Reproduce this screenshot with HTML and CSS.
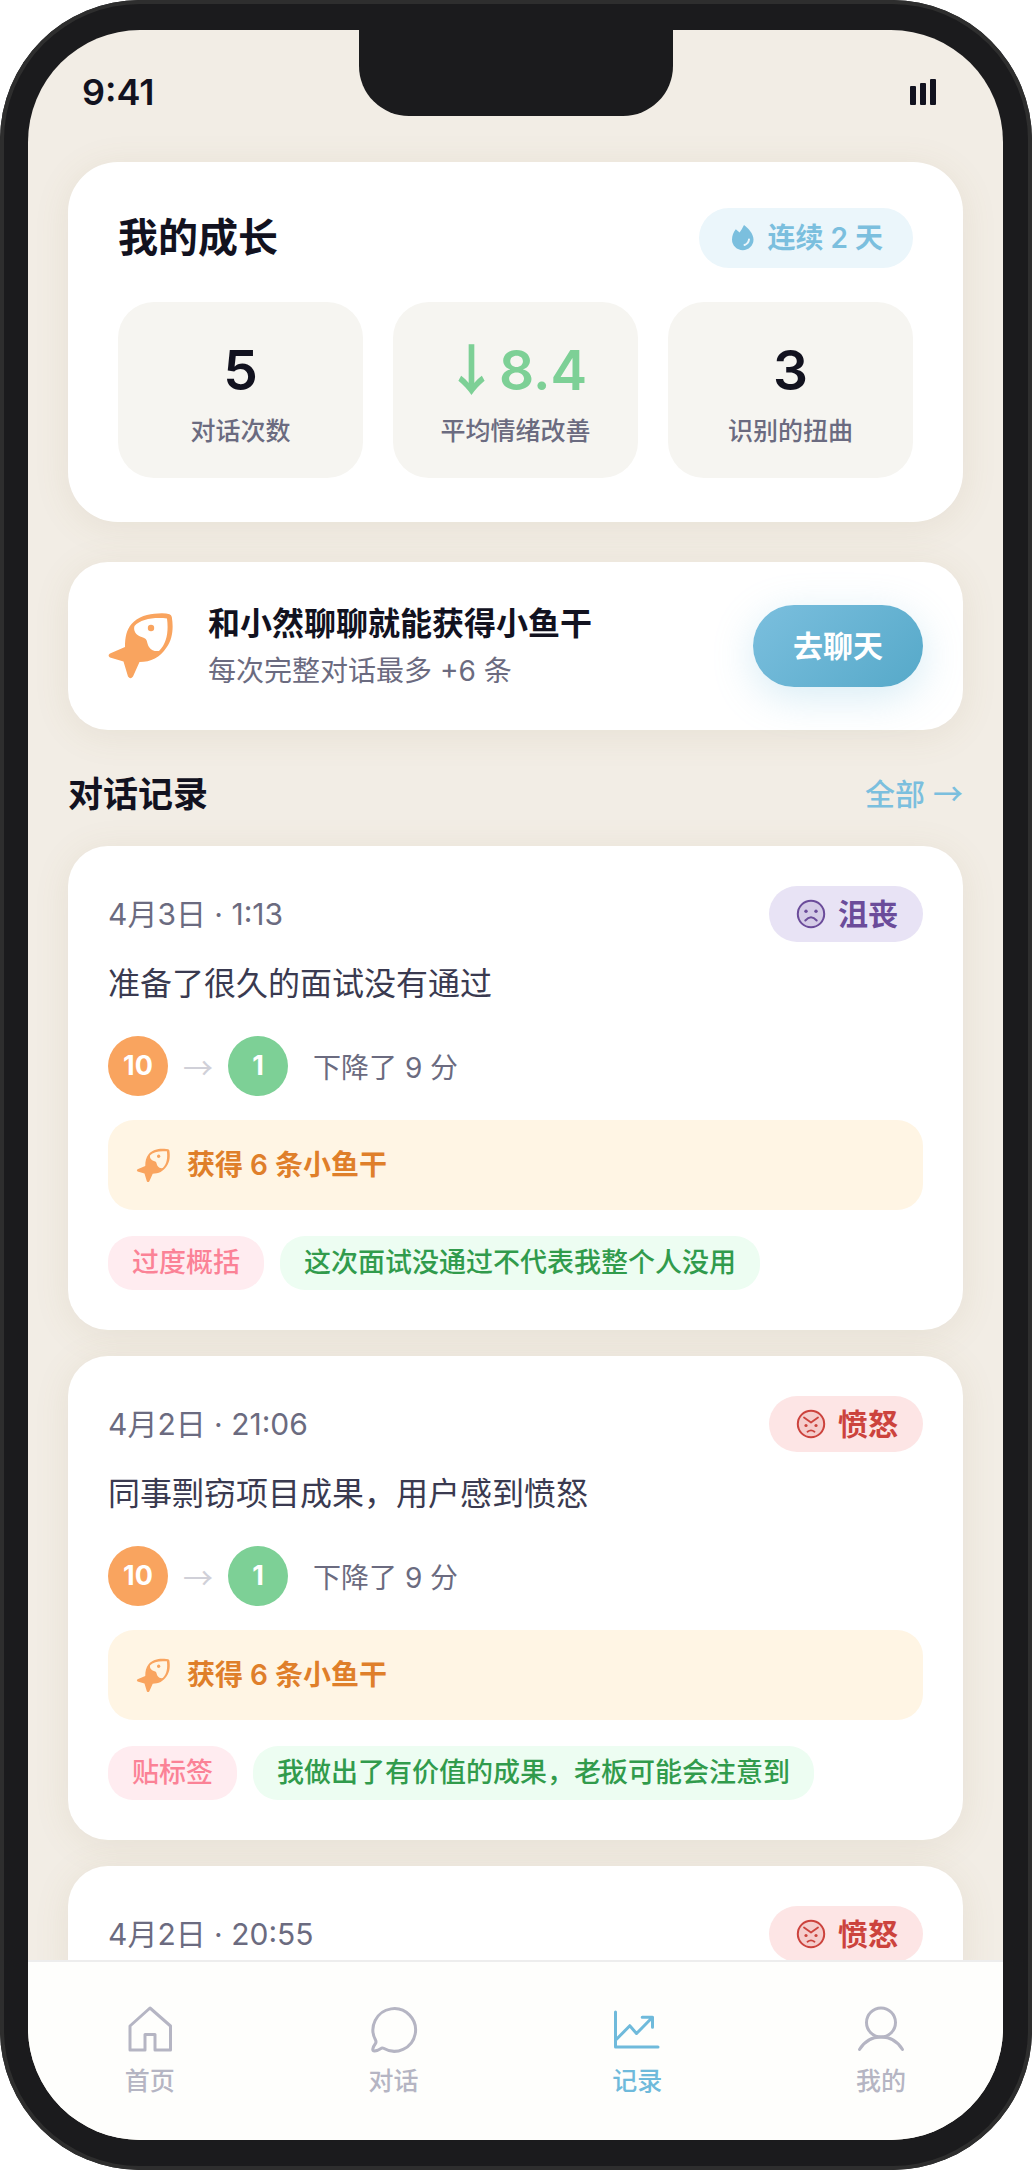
FILE: index.html
```html
<!DOCTYPE html>
<html lang="zh-CN">
<head>
<meta charset="utf-8">
<meta name="viewport" content="width=device-width, initial-scale=1">
<title>我的成长</title>
<link rel="stylesheet" href="styles.css">
</head>
<body>
<svg class="sprite" aria-hidden="true">
  <symbol id="fish" viewBox="0 0 66 68">
    <path fill="currentColor" fill-rule="evenodd" d="M50 1.5Q57 1 61.500 2.200Q63.300 2.800 63.800 5C65.500 15 65 27 58.500 35.500C52 45.500 43 50 31.500 50L25 64.500Q22.500 68 20 64.500L15.500 49.500L2 45.500Q-.8 43.500 2 41.500L17 35C17 25 18.500 18 23.500 12C30 4.500 40 1.800 50 1.500ZM26.500 14C25 19 28 23.500 35 25.500C40 27 38.500 31 41 35C43.500 38.500 47 39.500 51 39C59.500 31 60.500 18 59 6.500C45 5 32.500 7.500 26.500 14Z"/>
    <circle cx="43" cy="16" r="3.200" fill="currentColor"/>
  </symbol>
  <symbol id="sad" viewBox="0 0 30 30">
    <circle cx="15" cy="15" r="13.200" fill="currentColor" fill-opacity=".15" stroke="currentColor" stroke-width="2"/>
    <circle cx="10" cy="12.300" r="1.700" fill="currentColor"/><circle cx="20" cy="12.300" r="1.700" fill="currentColor"/>
    <path d="M9.300 21.500Q15 15 20.700 21.500" fill="none" stroke="currentColor" stroke-width="2" stroke-linecap="round"/>
  </symbol>
  <symbol id="angry" viewBox="0 0 30 30">
    <circle cx="15" cy="15" r="13.200" fill="currentColor" fill-opacity=".15" stroke="currentColor" stroke-width="2"/>
    <circle cx="10" cy="16.500" r="1.600" fill="currentColor"/><circle cx="20" cy="16.500" r="1.600" fill="currentColor"/>
    <path d="M8 8.500L15 13.500L22 8.500M11.500 22.800Q15 20 18.500 22.800" fill="none" stroke="currentColor" stroke-width="1.800" stroke-linecap="round" stroke-linejoin="round"/>
  </symbol>
</svg>
<div class="phone">
  <div class="screen">
    <div class="notch"></div>
    <header class="status">
      <span class="time">9:41</span>
      <svg class="signal" viewBox="0 0 28 26" aria-hidden="true"><rect x="1" y="7" width="6" height="19" rx="1"/><rect x="11" y="4" width="6" height="22" rx="1"/><rect x="21" y="0" width="6" height="26" rx="1"/></svg>
    </header>
    <main class="content">
      <section class="growth">
        <div class="row">
          <h1>我的成长</h1>
          <span class="streak">
            <svg viewBox="0 0 24 26" aria-hidden="true"><path fill="currentColor" d="M13 0C17 3 22.500 8.500 22.500 14.500A10.700 10.700 0 0 1 1 14.500C1 10.500 2.500 7 4.800 4.200L8.600 7.500C10 5.500 11.500 3 13 0Z"/><path d="M18 14.500Q17.500 18.500 13.500 20" fill="none" stroke="#ebf6fb" stroke-width="2" stroke-linecap="round"/></svg>
            连续 2 天
          </span>
        </div>
        <div class="stats">
          <div class="stat"><strong>5</strong><span>对话次数</span></div>
          <div class="stat good"><strong><i class="arrow">↓</i>8.4</strong><span>平均情绪改善</span></div>
          <div class="stat"><strong>3</strong><span>识别的扭曲</span></div>
        </div>
      </section>

      <section class="promo">
        <svg class="fish-large" aria-hidden="true"><use href="#fish"/></svg>
        <div class="promo-text">
          <h2>和小然聊聊就能获得小鱼干</h2>
          <p>每次完整对话最多 +6 条</p>
        </div>
        <button type="button" class="chat">去聊天</button>
      </section>

      <div class="row section-head">
        <h2>对话记录</h2>
        <a href="#all">全部 <i class="arrow">→</i></a>
      </div>

      <article class="record">
        <div class="row">
          <time>4月3日 · 1:13</time>
          <span class="mood sad"><svg aria-hidden="true"><use href="#sad"/></svg>沮丧</span>
        </div>
        <h3>准备了很久的面试没有通过</h3>
        <div class="score"><b class="before">10</b><i class="arrow">→</i><b class="after">1</b><span>下降了 9 分</span></div>
        <div class="reward"><svg aria-hidden="true"><use href="#fish"/></svg>获得 6 条小鱼干</div>
        <div class="tags"><span class="tag pink">过度概括</span><span class="tag green">这次面试没通过不代表我整个人没用</span></div>
      </article>

      <article class="record">
        <div class="row">
          <time>4月2日 · 21:06</time>
          <span class="mood angry"><svg aria-hidden="true"><use href="#angry"/></svg>愤怒</span>
        </div>
        <h3>同事剽窃项目成果，用户感到愤怒</h3>
        <div class="score"><b class="before">10</b><i class="arrow">→</i><b class="after">1</b><span>下降了 9 分</span></div>
        <div class="reward"><svg aria-hidden="true"><use href="#fish"/></svg>获得 6 条小鱼干</div>
        <div class="tags"><span class="tag pink">贴标签</span><span class="tag green">我做出了有价值的成果，老板可能会注意到</span></div>
      </article>

      <article class="record">
        <div class="row">
          <time>4月2日 · 20:55</time>
          <span class="mood angry"><svg aria-hidden="true"><use href="#angry"/></svg>愤怒</span>
        </div>
      </article>
    </main>
    <nav class="tabs">
      <a href="#home"><svg viewBox="0 0 48 48" aria-hidden="true"><path d="M4 21L24 3L44.500 21V45H29V29.500H19V45H4Z"/></svg>首页</a>
      <a href="#chat"><svg viewBox="0 0 48 48" aria-hidden="true"><path d="M5.500 35A21.300 21.300 0 1 1 13.500 43.300Q12.500 42.700 11.500 43.200Q8 45.500 4.500 46Q2.500 46 2.800 44Q3.200 41.500 5.500 38.500Q6.500 37 5.500 35Z"/></svg>对话</a>
      <a href="#records" class="active" aria-current="page"><svg viewBox="0 0 48 48" aria-hidden="true"><path d="M2.500 7V42H45M3.500 34.300L16.800 20.700L23.500 28.500L39.500 12.300M29.200 12.300H39.500V22.300"/></svg>记录</a>
      <a href="#me"><svg viewBox="0 0 48 48" aria-hidden="true"><circle cx="24" cy="17.500" r="14.500"/><path d="M2.500 44.500Q10 32 24 32T45.500 44.500"/></svg>我的</a>
    </nav>
  </div>
</div>
</body>
</html>
```
FILE: styles.css
```css
* {
  box-sizing: border-box;
}

body {
  margin: 0;
  background: #fff;
  color: #12121f;
  font-family: Inter, "Noto Sans CJK SC", sans-serif;
}

h1, h2, h3, p {
  margin: 0;
}

a {
  color: inherit;
  text-decoration: none;
}

svg {
  display: block;
  flex: none;
}

.sprite {
  display: none;
}

/* Full-width arrows that leave the line box of the text around them alone */
.arrow {
  font-family: "Noto Sans CJK SC", sans-serif;
  font-style: normal;
  line-height: 0;
}

/* Device frame */
.phone {
  height: 100vh;
  padding: 30px 29px 30px 28px;
  border-radius: 140px;
  background: #1b1b1d;
  box-shadow: inset 0 0 0 4px #2e2e2e;
}

.screen {
  position: relative;
  display: flex;
  flex-direction: column;
  height: 100%;
  overflow: hidden;
  border-radius: 112px;
  background: #f2ede5;
}

.notch {
  position: absolute;
  top: 0;
  left: 50%;
  width: 314px;
  height: 86px;
  transform: translateX(-50%);
  border-radius: 0 0 50px 50px;
  background: #1b1b1d;
}

.status {
  display: flex;
  align-items: center;
  justify-content: space-between;
  padding: 38px 66px 0 54px;
}

.time {
  font-size: 36px;
  line-height: 48px;
  font-weight: 600;
}

.signal {
  width: 28px;
  height: 26px;
  fill: #12121f;
}

.content {
  flex: 1;
  min-height: 0;
  overflow: hidden;
  padding: 46px 40px 0;
}

.row {
  display: flex;
  align-items: center;
  justify-content: space-between;
}

.growth, .promo, .record {
  background: #fff;
  box-shadow: 0 5px 36px rgba(139, 115, 70, .1);
}

/* Growth summary */
.growth {
  padding: 46px 50px 44px;
  border-radius: 50px;
}

.growth h1 {
  font-size: 40px;
  line-height: 60px;
  font-weight: 600;
}

.streak {
  display: flex;
  align-items: center;
  gap: 12px;
  padding: 0 30px 0 32px;
  border-radius: 30px;
  background: #ebf6fb;
  color: #7bbfde;
  font-size: 28px;
  line-height: 60px;
  font-weight: 600;
}

.streak svg {
  width: 24px;
  height: 26px;
}

.stats {
  display: grid;
  grid-template-columns: repeat(3, 1fr);
  gap: 30px;
  margin-top: 34px;
}

.stat {
  display: flex;
  flex-direction: column;
  align-items: center;
  gap: 14px;
  padding: 38px 0 30px;
  border-radius: 36px;
  background: #f6f5f1;
}

.stat strong {
  font-size: 55px;
  line-height: 60px;
  font-weight: 600;
}

.stat.good strong {
  color: #7dd096;
}

.stat span {
  color: #6b6b80;
  font-size: 25px;
  line-height: 34px;
  font-weight: 500;
}

/* Reward promotion */
.promo {
  display: flex;
  align-items: center;
  gap: 34px;
  margin-top: 40px;
  padding: 40px;
  border-radius: 40px;
}

.fish-large {
  width: 66px;
  height: 68px;
  color: #f9a45f;
}

.promo-text {
  display: flex;
  flex: 1;
  flex-direction: column;
  gap: 6px;
}

.promo h2 {
  font-size: 32px;
  line-height: 44px;
  font-weight: 600;
}

.promo p {
  color: #6b6b80;
  font-size: 28px;
  line-height: 38px;
}

.chat {
  padding: 0 40px;
  border: 0;
  border-radius: 41px;
  background: linear-gradient(135deg, #7bbfde, #56a9c9);
  box-shadow: 0 10px 40px rgba(123, 191, 222, .3);
  color: #fff;
  font-family: inherit;
  font-size: 30px;
  line-height: 82px;
  font-weight: 600;
}

/* Record list */
.section-head {
  padding: 40px 0 28px;
}

.section-head h2 {
  font-size: 35px;
  line-height: 48px;
  font-weight: 600;
}

.section-head a {
  color: #7bbfde;
  font-size: 30px;
  line-height: 48px;
  font-weight: 500;
}

.record {
  padding: 40px;
  border-radius: 40px;
}

.record + .record {
  margin-top: 26px;
}

.record time {
  color: #6b6b80;
  font-size: 30px;
  line-height: 56px;
}

.mood {
  display: flex;
  align-items: center;
  gap: 12px;
  padding: 0 25px 0 27px;
  border-radius: 28px;
  font-size: 30px;
  line-height: 56px;
  font-weight: 600;
}

.mood svg {
  width: 30px;
  height: 30px;
}

.mood.sad {
  background: #e8e3f5;
  color: #6b4c9a;
}

.mood.angry {
  background: #fde5e5;
  color: #cc433d;
}

.record h3 {
  margin: 20px 0 30px;
  color: #3a3a50;
  font-size: 32px;
  line-height: 44px;
  font-weight: 400;
}

.score {
  display: flex;
  align-items: center;
}

.score b {
  width: 60px;
  border-radius: 50%;
  color: #fff;
  font-size: 27px;
  line-height: 60px;
  font-weight: 700;
  text-align: center;
}

.score .before {
  background: #f9a45f;
}

.score .after {
  background: #7dd096;
}

.score .arrow {
  width: 60px;
  color: #d0d0d8;
  font-size: 30px;
  text-align: center;
}

.score span {
  margin-left: 25px;
  color: #6b6b80;
  font-size: 28px;
}

.reward {
  display: flex;
  align-items: center;
  gap: 16px;
  margin: 24px 0 26px;
  padding: 0 28px;
  border-radius: 26px;
  background: #fff5e4;
  color: #df7f2a;
  font-size: 28px;
  line-height: 90px;
  font-weight: 600;
}

.reward svg {
  width: 35px;
  height: 35px;
  color: #f9a45f;
}

.tags {
  display: flex;
  gap: 16px;
}

.tag {
  padding: 0 24px;
  border-radius: 25px;
  font-size: 27px;
  line-height: 54px;
  font-weight: 500;
  white-space: nowrap;
}

.tag.pink {
  background: #ffecf0;
  color: #fb8296;
}

.tag.green {
  background: #edfdf2;
  color: #319b4c;
}

/* Bottom navigation */
.tabs {
  display: grid;
  grid-template-columns: repeat(4, 1fr);
  padding: 43px 0 42px;
  border-top: 2px solid #ededed;
  background: #fefefc;
}

.tabs a {
  display: flex;
  flex-direction: column;
  align-items: center;
  gap: 11px;
  color: #b5b5c3;
  font-size: 25px;
  line-height: 34px;
  font-weight: 500;
}

.tabs .active {
  color: #6fbadb;
}

.tabs svg {
  width: 48px;
  height: 48px;
  fill: none;
  stroke: currentColor;
  stroke-width: 3;
  stroke-linecap: round;
  stroke-linejoin: round;
}
```
